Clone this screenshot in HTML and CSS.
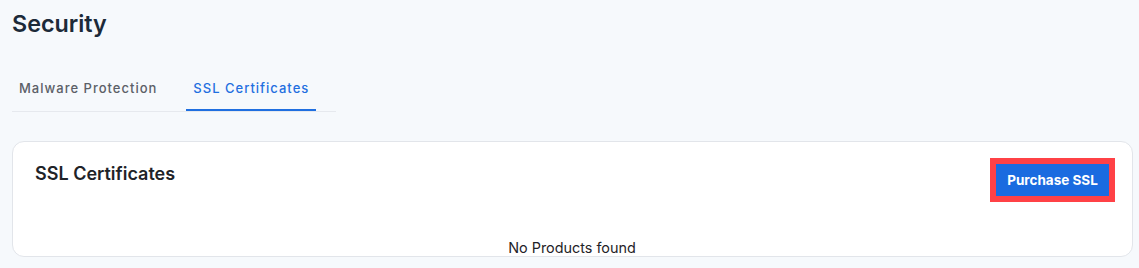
FILE: index.html
```html
<!DOCTYPE html>
<html lang="en">
<head>
<meta charset="utf-8">
<title>Security</title>
<link rel="stylesheet" href="styles.css">
</head>
<body>
  <main class="page">
    <h1 class="page-title">Security</h1>
    <nav class="tabs">
      <div class="tab">Malware Protection</div>
      <div class="tab tab-active">SSL Certificates</div>
    </nav>
    <section class="card">
      <div class="card-header">
        <h2 class="card-title">SSL Certificates</h2>
        <button class="btn-primary" type="button">Purchase SSL</button>
      </div>
      <p class="empty">No Products found</p>
    </section>
  </main>
</body>
</html>
```

FILE: styles.css
```css
* { box-sizing: border-box; }

html, body {
  margin: 0;
  padding: 0;
  background: #f6f9fc;
  font-family: Inter, "Noto Sans", "Liberation Sans", sans-serif;
}

.page {
  padding: 9px 6px 0 12px;
}

.page-title {
  margin: 0;
  font-size: 23.3px;
  line-height: 30px;
  font-weight: 600;
  color: #1c2a39;
}

.tabs {
  display: inline-flex;
  gap: 22px;
  margin-top: 23px;
  padding-right: 20px;
  border-bottom: 1px solid #e6e9ee;
}

.tab {
  padding: 16px 7px 11px 7px;
  font-size: 13px;
  line-height: 20px;
  letter-spacing: 1px;
  font-weight: 500;
  color: #5b6067;
  border-bottom: 2px solid transparent;
}

.tab-active {
  color: #1f6fe0;
  border-bottom-color: #1f6fe0;
}

.card {
  margin-top: 29px;
  height: 116px;
  overflow: hidden;
  background: #ffffff;
  border: 1px solid #e2e5ea;
  border-radius: 12px;
  padding: 20px 23px 0 22px;
}

.card-header {
  display: flex;
  justify-content: space-between;
  align-items: flex-start;
}

.card-title {
  margin: 0;
  font-size: 18px;
  line-height: 24px;
  font-weight: 600;
  color: #1f2328;
}

.btn-primary {
  margin-top: 2px;
  width: 113px;
  height: 32px;
  border: none;
  background: #1a6be0;
  color: #ffffff;
  font-family: inherit;
  font-size: 13.5px;
  font-weight: 700;
  outline: 6px solid #ff4146;
  cursor: pointer;
}

.empty {
  margin: 42px 0 0 0;
  text-align: center;
  font-size: 14.4px;
  line-height: 20px;
  color: #1f2328;
}
```
